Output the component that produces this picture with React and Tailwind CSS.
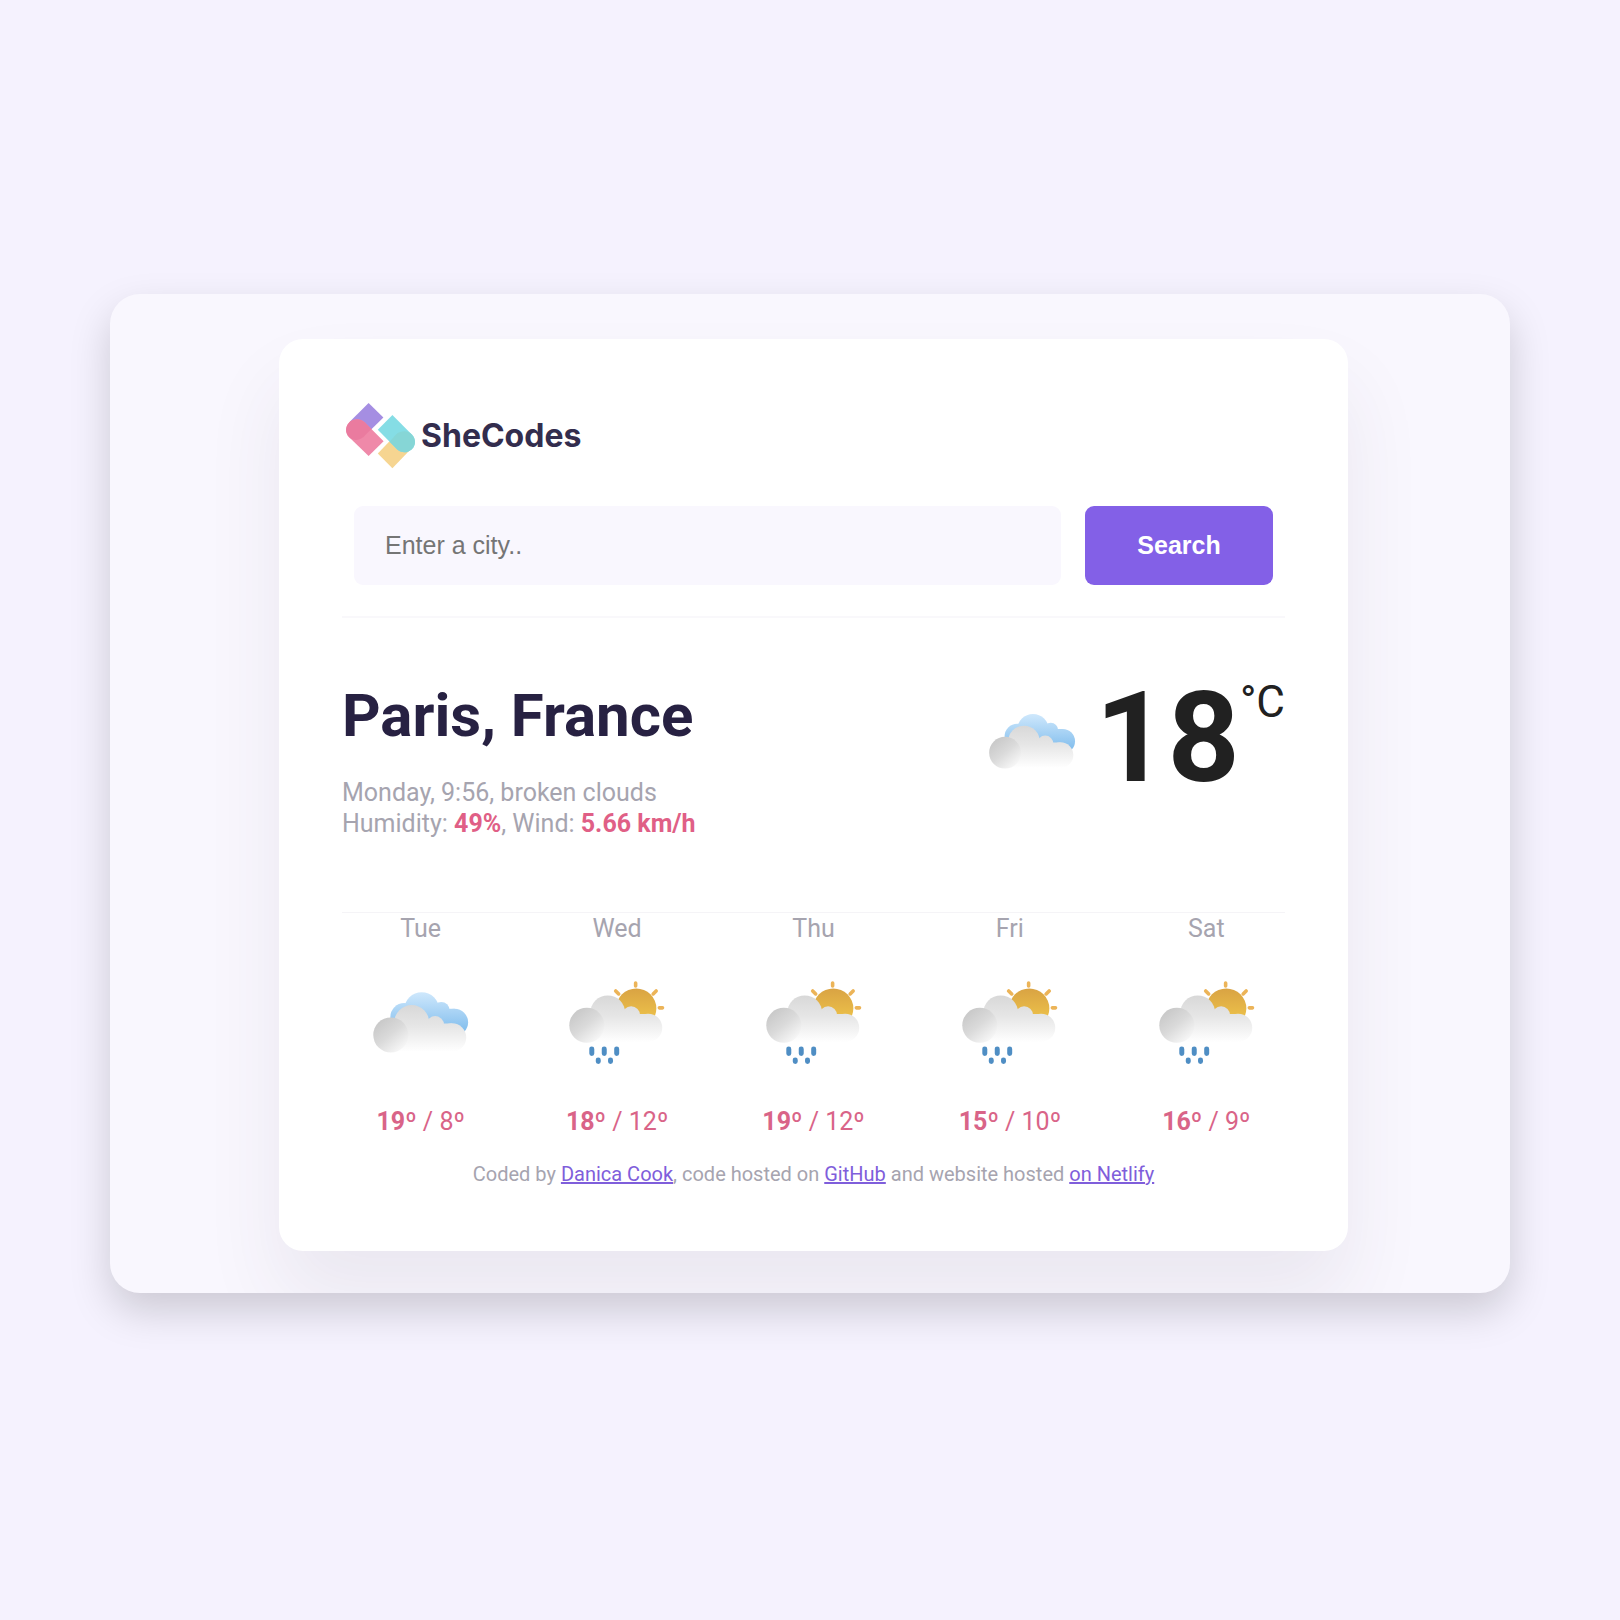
import React from "react";

const days = [
  { day: "Tue", high: 19, low: 8, icon: "clouds" },
  { day: "Wed", high: 18, low: 12, icon: "rain" },
  { day: "Thu", high: 19, low: 12, icon: "rain" },
  { day: "Fri", high: 15, low: 10, icon: "rain" },
  { day: "Sat", high: 16, low: 9, icon: "rain" },
];

function Gradients() {
  return (
    <svg width="0" height="0" className="absolute" aria-hidden="true">
      <defs>
        <linearGradient id="cloudBody" gradientUnits="userSpaceOnUse" x1="0" y1="61" x2="0" y2="108">
          <stop offset="0" stopColor="#d8d8d8" />
          <stop offset="0.45" stopColor="#e6e6e6" />
          <stop offset="1" stopColor="#ffffff" />
        </linearGradient>
        <linearGradient id="cloudPuff" x1="0.15" y1="0.1" x2="0.8" y2="0.9">
          <stop offset="0" stopColor="#c8c8c8" />
          <stop offset="0.5" stopColor="#dadada" />
          <stop offset="1" stopColor="#f6f6f6" />
        </linearGradient>
        <linearGradient id="cloudBack" gradientUnits="userSpaceOnUse" x1="0" y1="48" x2="0" y2="90">
          <stop offset="0" stopColor="#cfe8fc" />
          <stop offset="1" stopColor="#7dbbec" />
        </linearGradient>
        <linearGradient id="sunFill" x1="0" y1="0" x2="0" y2="1">
          <stop offset="0" stopColor="#d9a343" />
          <stop offset="1" stopColor="#f3cb4c" />
        </linearGradient>
      </defs>
    </svg>
  );
}

function FrontCloud() {
  return (
    <>
      <g fill="url(#cloudBody)">
        <circle cx="69" cy="78.5" r="17.5" />
        <circle cx="92.5" cy="81" r="9" />
        <circle cx="109.5" cy="93.5" r="14.2" />
        <path d="M48 107.7V84H69L92 79L101 80V79.6H109.5V107.7Z" />
      </g>
      <circle cx="48" cy="91" r="17.6" fill="url(#cloudPuff)" />
    </>
  );
}

function Clouds() {
  return (
    <>
      <g fill="url(#cloudBack)">
        <circle cx="79" cy="65.4" r="17.4" />
        <circle cx="61.5" cy="73" r="14" />
        <circle cx="98.7" cy="66" r="8.2" />
        <circle cx="112" cy="78.2" r="13.6" />
        <path d="M70 66H98V64.6H112V90H70Z" />
      </g>
      <FrontCloud />
    </>
  );
}

function Rain() {
  return (
    <>
      <circle cx="97.6" cy="64.5" r="20.2" fill="url(#sunFill)" />
      <g stroke="#ecb458" strokeWidth="3.6" strokeLinecap="round">
        <path d="M97 38.8V41.8M77 46.8L80 49.8M117.6 46.8L114.6 49.8M120.8 63.8H124" />
      </g>
      <g transform="translate(0 -9.7)">
        <FrontCloud />
      </g>
      <g stroke="#4f8ec4" strokeWidth="5" strokeLinecap="round">
        <path d="M53 105V109.6M65.5 105V109.6M78 105V109.6M59.5 116.2V117.6M71.8 116.2V117.6" />
      </g>
    </>
  );
}

function Logo() {
  return (
    <div className="flex h-[66px] items-center">
      <svg viewBox="0 0 76 66" className="h-[66px] w-[76px] shrink-0" aria-hidden="true">
        <path d="M26.6 0L41.4 14.6L21 34.5Q8 36 8 18.4Z" fill="#a58ee2" />
        <path d="M7.2 19.4C11.5 15.2 18.3 15 22.7 19.3L41.6 38.2L26.6 53L7.2 34.2C3 30 3 23.6 7.2 19.4Z" fill="#ef89a9" />
        <path d="M8 18.6C12.3 15.2 18.5 15.2 22.7 19.3L29.4 26L23.6 31.8C19.2 38 11.5 38.2 7.2 34.2C3 30 3 23.4 8 18.6Z" fill="#ea7b9f" />
        <path d="M50.4 35.2L67.5 47.6L50.4 65.2L35.8 50.4Z" fill="#f6d591" />
        <path d="M50.4 12L69.8 31.4C74 35.7 74 42 69.8 46.2C65.5 50.4 59 50.3 55 46.3L35.8 26.8Z" fill="#85dde5" />
        <path d="M54.5 31C59 27.4 65.6 27.2 69.8 31.4C74 35.7 74 42 69.8 46.2C65.5 50.4 59 50.3 55 46.3L47.6 38.8Z" fill="#86d6d6" />
      </svg>
      <span className="pl-[3px] font-['Inter',sans-serif] text-[32px] leading-[40px] font-bold text-[#332d4e]">
        SheCodes
      </span>
    </div>
  );
}

function FooterLink({ children }) {
  return (
    <a href="#" className="text-[#7f5edb] underline">
      {children}
    </a>
  );
}

export default function App() {
  return (
    <main className="min-h-screen bg-[#f5f2fe] px-[110px] py-[294px] font-['Roboto',sans-serif] text-[25px] leading-[31px] text-[#a6a4af]">
      <Gradients />
      <div className="overflow-hidden rounded-[30px] bg-[#f9f7fe] pt-[45px] pr-[162px] pb-[42px] pl-[169px] shadow-[0_18px_40px_rgba(0,0,0,0.17)]">
        <div className="rounded-3xl bg-white p-[63px] pt-16 shadow-[0_47px_79px_rgba(60,50,80,0.08)]">
          <Logo />
          <form className="mt-[37px] flex gap-6 px-3" onSubmit={(e) => e.preventDefault()}>
            <input
              type="search"
              aria-label="City"
              placeholder="Enter a city.."
              className="h-[79px] min-w-0 flex-1 rounded-[9px] bg-[#f9f7fe] px-[31px] font-['Liberation_Sans',sans-serif] text-[25px] text-[#272142] outline-none placeholder:text-[#757575]"
            />
            <button
              type="submit"
              className="h-[79px] w-[188px] rounded-[9px] bg-[#8360e7] font-['Liberation_Sans',sans-serif] text-[25px] font-bold text-white"
            >
              Search
            </button>
          </form>

          <section className="mt-[31px] flex justify-between border-t-2 border-[#f9f8fb] pt-[57px]">
            <div className="pt-[11px]">
              <h1 className="text-[60px] leading-[60px] font-bold text-[#272142]">Paris, France</h1>
              <p className="mt-[31px]">
                Monday, 9:56, broken clouds
                <br />
                Humidity: <strong className="font-bold text-[#e05f86]">49%</strong>, Wind:{" "}
                <strong className="font-bold text-[#e05f86]">5.66 km/h</strong>
              </p>
            </div>
            <div className="flex items-start text-[#212121]">
              <svg viewBox="28 46 102 64" className="mt-[37px] mr-4 h-[58px] w-[92px]" role="img" aria-label="broken clouds">
                <Clouds />
              </svg>
              <span className="text-[126px] leading-[126px] font-bold">18</span>
              <span className="mt-[5px] text-[44px] leading-[44px]">°C</span>
            </div>
          </section>

          <section className="mt-[73px] grid grid-cols-5 gap-[39px] border-t border-[#f5f4f7] text-center">
            {days.map(({ day, high, low, icon }) => (
              <div key={day}>
                <div>{day}</div>
                <svg viewBox="-1 0 158 162" className="h-[162px] w-full" role="img" aria-label={icon}>
                  {icon === "clouds" ? <Clouds /> : <Rain />}
                </svg>
                <div className="text-[#d96488]">
                  <strong className="font-bold">{high}º</strong> / {low}º
                </div>
              </div>
            ))}
          </section>

          <footer className="mt-[23px] text-center text-[20px] leading-[28px]">
            Coded by <FooterLink>Danica Cook</FooterLink>, code hosted on <FooterLink>GitHub</FooterLink> and website
            hosted <FooterLink>on Netlify</FooterLink>
          </footer>
        </div>
      </div>
    </main>
  );
}
